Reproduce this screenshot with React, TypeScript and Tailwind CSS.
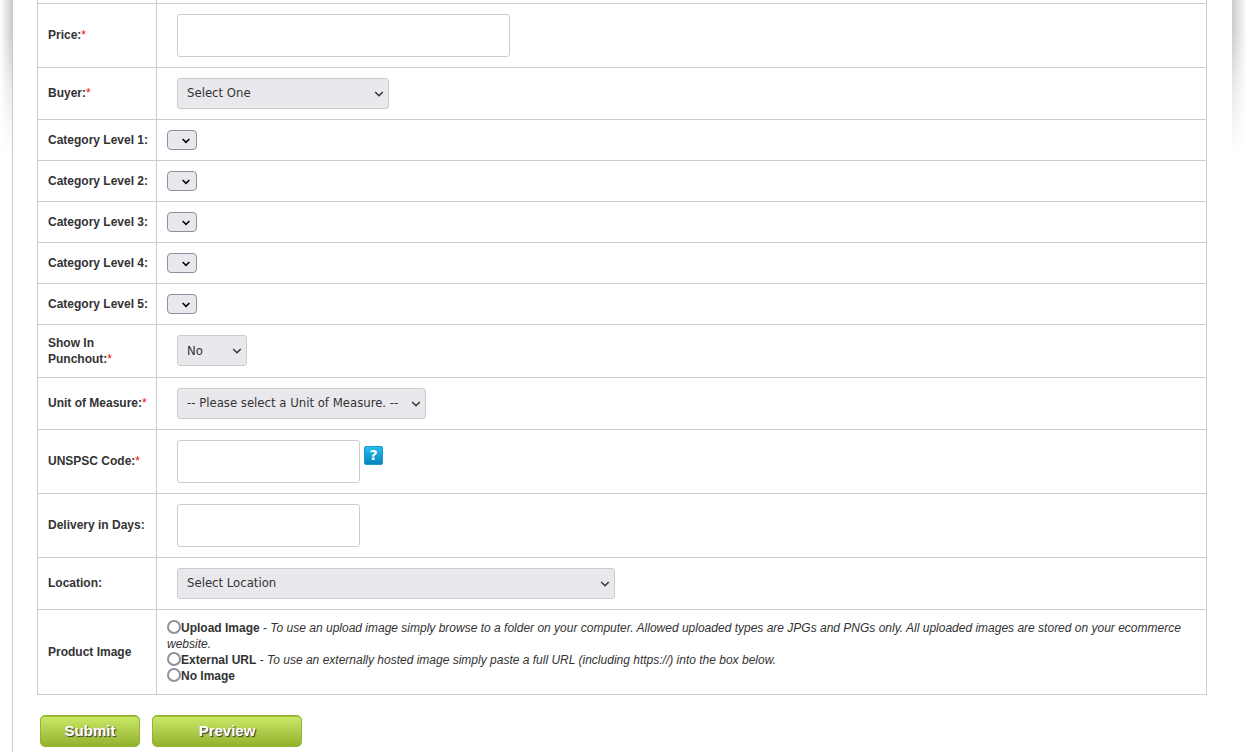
import React from 'react';

type SelectSize = 'small' | 'normal';

const Chevron: React.FC<{ className: string }> = ({ className }) => (
  <svg className={className} width="10" height="8" viewBox="0 0 10 8" fill="none" aria-hidden="true">
    <path d="M1.2 2l3.8 3.8L8.8 2" stroke="currentColor" strokeWidth="1.5" />
  </svg>
);

const SmallChevron: React.FC<{ className: string }> = ({ className }) => (
  <svg className={className} width="8" height="6" viewBox="0 0 8 6" fill="none" aria-hidden="true">
    <path d="M.6 1l3.4 3.4L7.4 1" stroke="currentColor" strokeWidth="1.5" />
  </svg>
);

const Select: React.FC<{ id: string; option?: string; width: string; size?: SelectSize }> = ({
  id,
  option = '',
  width,
  size = 'normal',
}) => {
  if (size === 'small') {
    return (
      <div className={`relative ${width}`}>
        <select
          id={id}
          className="block h-5 w-full appearance-none rounded-[4px] border border-[#8f8f9d] bg-[#e9e9ed]"
        >
          <option>{option}</option>
        </select>
        <SmallChevron className="pointer-events-none absolute top-2 right-[7px] text-black" />
      </div>
    );
  }

  return (
    <div className={`relative ml-[10px] max-w-full ${width}`}>
      <select
        id={id}
        className="block h-[31px] w-full appearance-none rounded-[3px] border border-[#cccccc] bg-[#e9e9ed] pl-[9px] font-['DejaVu_Sans_Condensed','DejaVu_Sans',sans-serif] text-[13px] text-[#333333]"
      >
        <option>{option}</option>
      </select>
      <Chevron className="pointer-events-none absolute top-3 right-[5px] text-[#333333]" />
    </div>
  );
};

const TextBox: React.FC<{ id: string; width: string }> = ({ id, width }) => (
  <input
    id={id}
    type="text"
    className={`ml-[10px] block h-[43px] rounded-[3px] border border-[#cccccc] bg-white px-2 ${width}`}
  />
);

const Row: React.FC<{ id: string; label: string; required?: boolean; children: React.ReactNode }> = ({
  id,
  label,
  required,
  children,
}) => (
  <tr>
    <th scope="row" className="border border-[#cccccc] py-[10px] pr-1 pl-[10px] text-left align-middle font-bold">
      <label htmlFor={id}>
        {label}
        {required && <span className="font-normal text-[#ff0000]">*</span>}
      </label>
    </th>
    <td className="border border-[#cccccc] py-[10px] pr-1 pl-[10px] align-middle">{children}</td>
  </tr>
);

const HelpIcon: React.FC = () => (
  <button
    type="button"
    aria-label="Help"
    className="mt-[6px] ml-1 flex h-[19px] w-[19px] items-center justify-center rounded-[2px] border border-[#1a9bd0] bg-linear-to-b from-[#22bdf0] to-[#0784bd] font-['DejaVu_Sans',sans-serif] text-[14px] leading-4 font-bold text-white"
  >
    ?
  </button>
);

const ImageOption: React.FC<{ id: string; label: string; hint?: string }> = ({ id, label, hint }) => (
  <div>
    <input
      id={id}
      type="radio"
      name="productImage"
      className="inline-block h-[14px] w-[14px] appearance-none rounded-full border-2 border-[#8f8f9d] bg-white align-top"
    />
    <label htmlFor={id} className="font-bold">
      {label}
    </label>
    {hint && (
      <>
        {' - '}
        <em>{hint}</em>
      </>
    )}
  </div>
);

const GreenButton: React.FC<{ width: string; children: React.ReactNode }> = ({ width, children }) => (
  <button
    type="button"
    className={`h-8 rounded-[5px] border border-[#93b52d] bg-linear-to-b from-[#cdea69] to-[#93b22b] text-[15px] leading-5 font-bold text-white shadow-[inset_0_1px_0_#9dbd35] [text-shadow:1px_1px_1px_#333333] ${width}`}
  >
    {children}
  </button>
);

const categories = [1, 2, 3, 4, 5];

const App: React.FC = () => {
  return (
    <div className="grid min-h-screen grid-cols-[12px_minmax(0,1fr)_15px] bg-white font-['Liberation_Sans',Arial,sans-serif] text-[12px] leading-4 text-[#333333]">
      <div className="h-[155px] bg-linear-to-l from-[#cbcbcb] to-white [mask-image:linear-gradient(to_bottom,black_20%,rgba(0,0,0,0.4)_60%,transparent)]" />

      <form className="border-l border-[#cccccc] pr-[25px] pb-[5px] pl-6" onSubmit={(e) => e.preventDefault()}>
        <table className="w-full table-fixed border-collapse">
          <colgroup>
            <col className="w-[119px]" />
            <col />
          </colgroup>
          <tbody>
            <tr aria-hidden="true">
              <td className="h-[3px] border-x border-[#cccccc] p-0" />
              <td className="h-[3px] border-x border-[#cccccc] p-0" />
            </tr>
            <Row id="price" label="Price:" required>
              <TextBox id="price" width="w-[333px]" />
            </Row>
            <Row id="buyer" label="Buyer:" required>
              <Select id="buyer" option="Select One" width="w-[212px]" />
            </Row>
            {categories.map((level) => (
              <Row key={level} id={`category${level}`} label={`Category Level ${level}:`}>
                <Select id={`category${level}`} width="w-[30px]" size="small" />
              </Row>
            ))}
            <Row id="punchout" label="Show In Punchout:" required>
              <Select id="punchout" option="No" width="w-[70px]" />
            </Row>
            <Row id="unit" label="Unit of Measure:" required>
              <Select id="unit" option="-- Please select a Unit of Measure. --" width="w-[249px]" />
            </Row>
            <Row id="unspsc" label="UNSPSC Code:" required>
              <div className="flex items-start">
                <TextBox id="unspsc" width="w-[183px]" />
                <HelpIcon />
              </div>
            </Row>
            <Row id="delivery" label="Delivery in Days:">
              <TextBox id="delivery" width="w-[183px]" />
            </Row>
            <Row id="location" label="Location:">
              <Select id="location" option="Select Location" width="w-[438px]" />
            </Row>
            <Row id="uploadImage" label="Product Image">
              <ImageOption
                id="uploadImage"
                label="Upload Image"
                hint="To use an upload image simply browse to a folder on your computer. Allowed uploaded types are JPGs and PNGs only. All uploaded images are stored on your ecommerce website."
              />
              <ImageOption
                id="externalUrl"
                label="External URL"
                hint="To use an externally hosted image simply paste a full URL (including https://) into the box below."
              />
              <ImageOption id="noImage" label="No Image" />
            </Row>
          </tbody>
        </table>

        <div className="mt-5 ml-[3px] flex gap-3">
          <GreenButton width="w-[100px]">Submit</GreenButton>
          <GreenButton width="w-[150px]">Preview</GreenButton>
        </div>
      </form>

      <div className="h-[155px] bg-linear-to-r from-[#cbcbcb] to-white [mask-image:linear-gradient(to_bottom,black_20%,rgba(0,0,0,0.4)_60%,transparent)]" />
    </div>
  );
};

export default App;
